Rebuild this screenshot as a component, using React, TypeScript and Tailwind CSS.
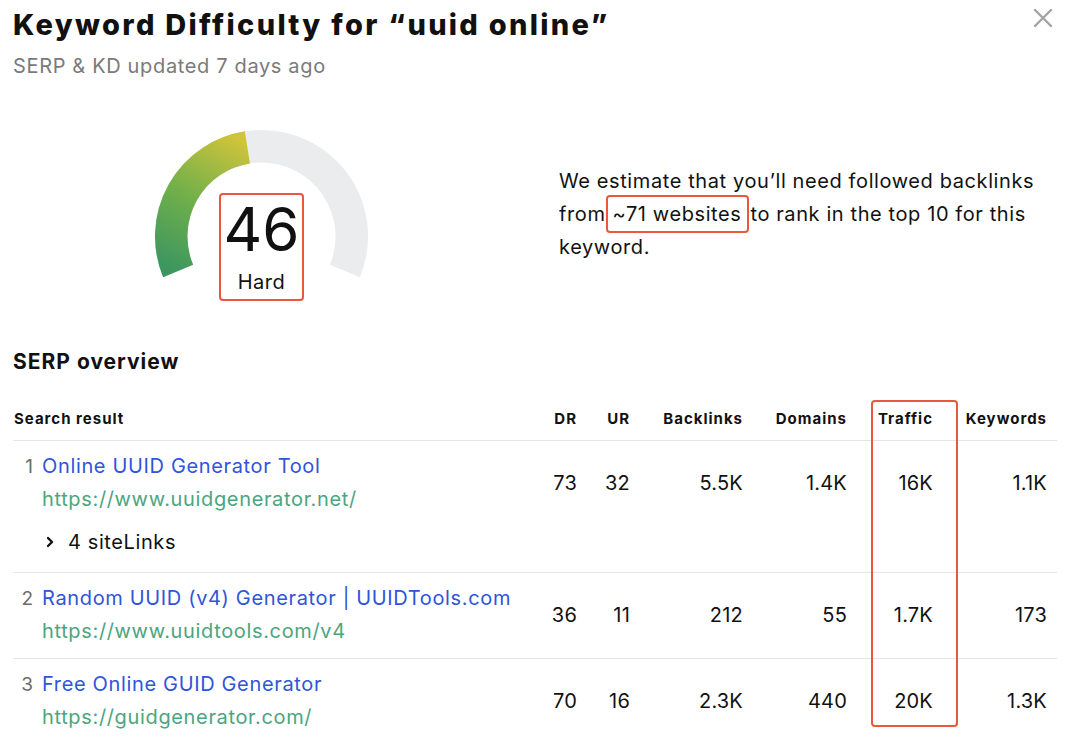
import React from "react";

const rows = [
  {
    n: 1,
    title: "Online UUID Generator Tool",
    url: "https://www.uuidgenerator.net/",
    dr: "73",
    ur: "32",
    bl: "5.5K",
    dom: "1.4K",
    tr: "16K",
    kw: "1.1K",
    sitelinks: true,
  },
  {
    n: 2,
    title: "Random UUID (v4) Generator | UUIDTools.com",
    url: "https://www.uuidtools.com/v4",
    dr: "36",
    ur: "11",
    bl: "212",
    dom: "55",
    tr: "1.7K",
    kw: "173",
  },
  {
    n: 3,
    title: "Free Online GUID Generator",
    url: "https://guidgenerator.com/",
    dr: "70",
    ur: "16",
    bl: "2.3K",
    dom: "440",
    tr: "20K",
    kw: "1.3K",
  },
];

const cols = "grid grid-cols-[527px_47px_53px_113px_104px_86px_114px]";

function Gauge() {
  return (
    <div className="relative w-[214px] h-[150px] shrink-0">
      <svg width="214" height="150" viewBox="0 0 214 150">
        <defs>
          <linearGradient id="g" gradientUnits="userSpaceOnUse" x1="20" y1="145" x2="95" y2="15">
            <stop offset="0" stopColor="#3b9660" />
            <stop offset="0.5" stopColor="#72b04a" />
            <stop offset="1" stopColor="#d2c43a" />
          </linearGradient>
        </defs>
        <path
          d="M 23.12 142.04 A 90.25 90.25 0 1 1 189.88 142.04"
          fill="none"
          stroke="#ebecee"
          strokeWidth="32.5"
        />
        <path
          d="M 23.12 142.04 A 90.25 90.25 0 0 1 92.38 18.36"
          fill="none"
          stroke="url(#g)"
          strokeWidth="32.5"
        />
      </svg>
      <div className="absolute left-[64px] top-[64px] w-[85px] h-[108px] border-2 border-[#e9573c] rounded-[4px] flex flex-col items-center">
        <div className="text-[60px] leading-[60px] mt-[4px] text-[#111]">46</div>
        <div className="text-[20px] leading-[24px] mt-[11px] tracking-[0.5px] text-[#111]">Hard</div>
      </div>
    </div>
  );
}

export default function App() {
  return (
    <div
      className="w-[1080px] h-[743px] overflow-hidden bg-white relative text-[#111]"
      style={{ fontFamily: "Inter, 'Noto Sans', sans-serif" }}
    >
      <div className="pl-[13px] pt-[7px]">
        <div className="text-[29px] leading-[36px] font-extrabold tracking-[2.3px]">
          Keyword Difficulty for “uuid online”
        </div>
        <div className="mt-[9px] text-[20px] leading-[28px] tracking-[0.65px] text-[#7a7a7a]">
          SERP &amp; KD updated 7 days ago
        </div>
      </div>

      <svg
        className="absolute left-[1033px] top-[9px]"
        width="20"
        height="19"
        viewBox="0 0 20 19"
      >
        <path d="M2 1 L18 17 M18 1 L2 17" stroke="#a3a3a3" strokeWidth="2.4" strokeLinecap="round" />
      </svg>

      <div className="flex items-start pl-[155px] mt-[49px]">
        <Gauge />
        <p className="ml-[190px] mt-[36px] text-[20px] leading-[33px] tracking-[0.6px] text-[#111]">
          We estimate that you’ll need followed backlinks
          <br />
          from
          <span className="mr-[1px] pl-[5px] pr-[6px] py-[5px] border-2 border-[#e9573c] rounded-[4px]">
            ~71 websites
          </span>
          to rank in the top 10 for this
          <br />
          keyword.
        </p>
      </div>

      <div className="pl-[13px] mt-[69px] text-[21px] leading-[28px] font-bold tracking-[1px]">SERP overview</div>

      <div className="relative ml-[13px] mt-[33px] w-[1044px]">
        <div className={`${cols} pb-[11px] border-b border-[#e6e6e6] text-[15px] leading-[20px] font-bold tracking-[1px]`}>
          <div className="pl-[1px]">Search result</div>
          <div className="text-right pr-[10px]">DR</div>
          <div className="text-right pr-[10px]">UR</div>
          <div className="text-right pr-[10px]">Backlinks</div>
          <div className="text-right pr-[10px]">Domains</div>
          <div className="text-right pr-[10px]">Traffic</div>
          <div className="text-right pr-[10px]">Keywords</div>
        </div>

        {rows.map((r, i) => (
          <div
            key={r.n}
            className={`${cols} pt-[9px] ${r.sitelinks ? "pb-[4px]" : "pb-[10px]"} ${
              i < rows.length - 1 ? "border-b border-[#e6e6e6]" : ""
            }`}
          >
            <div>
              <div className="flex">
                <div className="w-[20px] text-right text-[19px] leading-[33px] text-[#6b6b6b]">{r.n}</div>
                <div className="ml-[9px] text-[20px] leading-[33px] tracking-[0.65px]">
                  <div className="text-[#2f55d9] whitespace-nowrap">{r.title}</div>
                  <div className="text-[#4ba57f] whitespace-nowrap">{r.url}</div>
                </div>
              </div>
              {r.sitelinks && (
                <div className="h-[52px] flex items-center pl-[32px] text-[20px] tracking-[0.6px]">
                  <svg width="10" height="14" viewBox="0 0 10 14">
                    <path d="M3 3 L7 7 L3 11" fill="none" stroke="#111" strokeWidth="2.4" strokeLinecap="round" strokeLinejoin="round" />
                  </svg>
                  <span className="ml-[13px]">4 siteLinks</span>
                </div>
              )}
            </div>
            {[r.dr, r.ur, r.bl, r.dom, r.tr, r.kw].map((v, j) => (
              <div key={j} className="h-[66px] flex items-center justify-end pr-[10px] text-[20px] tracking-[0.2px]">
                {v}
              </div>
            ))}
          </div>
        ))}

        <div className="absolute left-[858px] top-[-9px] w-[87px] h-[327px] border-2 border-[#e9573c] rounded-[4px]" />
      </div>
    </div>
  );
}
